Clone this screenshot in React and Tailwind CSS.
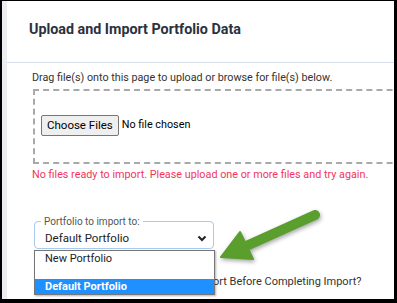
import React from 'react';

function Arrow() {
  return (
    <svg
      className="absolute left-0 top-0 pointer-events-none"
      width="397"
      height="303"
      style={{ filter: 'drop-shadow(1px 2px 2px rgba(0,0,0,0.35))' }}
    >
      <line x1="315" y1="215" x2="244" y2="247" stroke="#5a9e2e" strokeWidth="10" strokeLinecap="round" />
      <polygon points="221,257 240,232 253,259" fill="#5a9e2e" stroke="#5a9e2e" strokeWidth="2" strokeLinejoin="round" />
    </svg>
  );
}

export default function App() {
  return (
    <div className="relative w-[397px] h-[303px] bg-black pt-[1px] pl-[2px] pr-[3px] pb-[4px] font-['Roboto',sans-serif] overflow-hidden">
      <div className="flex h-full">
        <div className="w-[5px] shrink-0 bg-[#ecedf1]" />
        <div className="flex-1 bg-white overflow-hidden flex flex-col">
          <header className="h-[62px] shrink-0 border-b border-[#d6deea] pl-[22px] pt-[18px]">
            <h1 className="text-[14.3px] leading-[20px] font-bold text-[#2b3140]">Upload and Import Portfolio Data</h1>
          </header>
          <div className="pl-[25px] pt-[8px] text-[#333]">
            <p className="text-[10.75px] leading-[14px] whitespace-nowrap">Drag file(s) onto this page to upload or browse for file(s) below.</p>
            <div className="mt-[4px] ml-[1px] w-[400px] h-[75px] border-2 border-dashed border-[#a9a9a9] flex items-center pl-[6px] pb-[3px]">
              <span className="h-[21px] px-[5px] border border-[#767676] rounded-[2px] bg-[#efefef] text-[11.5px] leading-[19px] text-black">Choose Files</span>
              <span className="ml-[3px] text-[10.8px] text-black">No file chosen</span>
            </div>
            <p className="mt-[4px] text-[10.8px] leading-[14px] text-[#f2345c] whitespace-nowrap">No files ready to import. Please upload one or more files and try again.</p>
            <div className="relative mt-[39px] ml-[2px] w-[180px] h-[28px] border border-[#a9c9ee] rounded-[4px] pl-[10px] pr-[6px]">
              <span className="absolute left-[6px] top-[-5px] px-[3px] bg-white text-[10px] leading-[10px] text-[#555]">Portfolio to import to:</span>
              <div className="flex items-center justify-between pt-[9px] text-[11.5px] leading-[14px] text-[#222]">
                <span>Default Portfolio</span>
                <svg width="10" height="7" viewBox="0 0 10 7">
                  <path d="M1.5 1.5 L5 5 L8.5 1.5" fill="none" stroke="#222" strokeWidth="2" />
                </svg>
              </div>
            </div>
            <div className="mt-[26px] flex items-center text-[11px] leading-[14px] text-[#333] whitespace-nowrap">
              <span className="ml-[121px]">Preview Import Before Completing Import?</span>
            </div>
          </div>
        </div>
      </div>
      <div className="absolute left-[34px] top-[250px] w-[181px] h-[45px] bg-white border border-[#767676] shadow-[1px_1px_2px_rgba(0,0,0,0.3)] text-[11px] text-[#222]">
        <div className="h-[15px] leading-[15px] pl-[10px]">New Portfolio</div>
        <div className="h-[13px]" />
        <div className="h-[15px] leading-[15px] pl-[10px] bg-[#1e90ff] text-white font-bold">Default Portfolio</div>
      </div>
      <Arrow />
    </div>
  );
}
